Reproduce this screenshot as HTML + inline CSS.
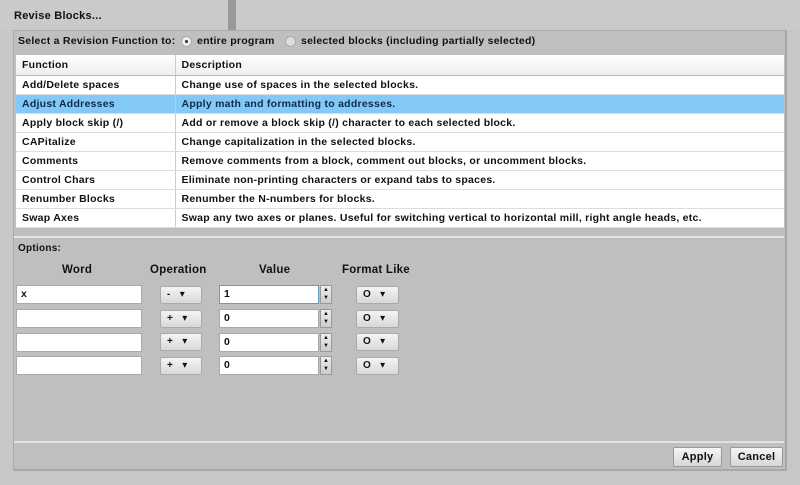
<!DOCTYPE html>
<html><head><style>
*{margin:0;padding:0;box-sizing:border-box}
body{width:800px;height:485px;background:#c6c8c8;font-family:"Liberation Sans","DejaVu Sans",sans-serif;font-size:11px;font-weight:bold;color:#111;position:relative;overflow:hidden;letter-spacing:.25px}
.a{position:absolute}
.title{left:14px;top:10px;font-size:11px}
.panel{left:13px;top:30px;width:774px;height:441px;background:#bfbfbf;border:1px solid #aaa;border-right:2px solid #a8a8a8;border-bottom:2px solid #a8a8a8}
table{position:absolute;left:16px;top:55px;width:768px;border-collapse:collapse;background:#fff}
td{height:19px;padding:0 6px;border-bottom:1px solid #ddd;white-space:nowrap;font-size:10.5px}
td:first-child{width:159px;border-right:1px solid #ccc}
tr.h td{height:20px;background:linear-gradient(#fff,#eee);border-bottom:1px solid #bbb}
tr.s td{background:#83c9f8;color:#0f2a4a}
.in{background:#fff;border:1px solid #aaa;height:19px;padding-left:4px;line-height:17px;font-size:10.5px}
.dd{background:linear-gradient(#f4f4f4,#d8d8d8);border:1px solid #aaa;border-radius:2px;height:18px;line-height:16px;font-size:10px}
.btn{background:linear-gradient(#f6f6f6,#d6d6d6);border:1px solid #999;border-radius:2px;height:20px;line-height:18px;text-align:center;font-size:11px}
.sp{width:12px;height:19px;background:linear-gradient(#eee,#ccc);border:1px solid #999;font-size:6px;line-height:8px;text-align:center;letter-spacing:0}
</style></head><body>
<div class="a" style="left:0;top:0;width:800px;height:30px;background:#c9cbcb"></div>
<div class="a" style="left:228px;top:0;width:8px;height:30px;background:#9a9a9a"></div>
<div class="a title">Revise Blocks...</div>
<div class="a panel"></div>
<div class="a" style="left:18px;top:35px;font-size:10.5px">Select a Revision Function to:</div>
<div class="a" style="left:181px;top:36px;width:11px;height:11px;border-radius:50%;background:#eee;border:1px solid #aaa"><div style="width:3px;height:3px;background:#333;border-radius:50%;margin:3px"></div></div>
<div class="a" style="left:197px;top:35px;font-size:10.5px">entire program</div>
<div class="a" style="left:285px;top:36px;width:11px;height:11px;border-radius:50%;background:#ddd;border:1px solid #aaa"></div>
<div class="a" style="left:301px;top:35px;font-size:10.5px">selected blocks (including partially selected)</div>
<table>
<tr class="h"><td>Function</td><td>Description</td></tr>
<tr><td>Add/Delete spaces</td><td>Change use of spaces in the selected blocks.</td></tr>
<tr class="s"><td>Adjust Addresses</td><td>Apply math and formatting to addresses.</td></tr>
<tr><td>Apply block skip (/)</td><td>Add or remove a block skip (/) character to each selected block.</td></tr>
<tr><td>CAPitalize</td><td>Change capitalization in the selected blocks.</td></tr>
<tr><td>Comments</td><td>Remove comments from a block, comment out blocks, or uncomment blocks.</td></tr>
<tr><td>Control Chars</td><td>Eliminate non-printing characters or expand tabs to spaces.</td></tr>
<tr><td>Renumber Blocks</td><td>Renumber the N-numbers for blocks.</td></tr>
<tr><td>Swap Axes</td><td>Swap any two axes or planes. Useful for switching vertical to horizontal mill, right angle heads, etc.</td></tr>
</table>
<div class="a" style="left:14px;top:236px;width:770px;height:2px;background:#e6e6e6"></div>
<div class="a" style="left:18px;top:243px;font-size:10px">Options:</div>
<div class="a" style="left:62px;top:264px;font-size:11.5px">Word</div>
<div class="a" style="left:150px;top:264px;font-size:11.5px">Operation</div>
<div class="a" style="left:259px;top:264px;font-size:11.5px">Value</div>
<div class="a" style="left:342px;top:264px;font-size:11.5px">Format Like</div>

<div class="a in" style="left:16px;top:285px;width:126px">x</div>
<div class="a in" style="left:16px;top:309px;width:126px"></div>
<div class="a in" style="left:16px;top:333px;width:126px"></div>
<div class="a in" style="left:16px;top:356px;width:126px"></div>

<div class="a dd" style="left:160px;top:286px;width:42px">&nbsp;&nbsp;-&nbsp;&nbsp;&nbsp;▾</div>
<div class="a dd" style="left:160px;top:310px;width:42px">&nbsp;&nbsp;+&nbsp;&nbsp;&nbsp;▾</div>
<div class="a dd" style="left:160px;top:333px;width:42px">&nbsp;&nbsp;+&nbsp;&nbsp;&nbsp;▾</div>
<div class="a dd" style="left:160px;top:357px;width:42px">&nbsp;&nbsp;+&nbsp;&nbsp;&nbsp;▾</div>

<div class="a in" style="left:219px;top:285px;width:100px;border-color:#6a9bc0">1</div>
<div class="a in" style="left:219px;top:309px;width:100px">0</div>
<div class="a in" style="left:219px;top:333px;width:100px">0</div>
<div class="a in" style="left:219px;top:356px;width:100px">0</div>
<div class="a sp" style="left:320px;top:285px">▲<br>▼</div>
<div class="a sp" style="left:320px;top:309px">▲<br>▼</div>
<div class="a sp" style="left:320px;top:333px">▲<br>▼</div>
<div class="a sp" style="left:320px;top:356px">▲<br>▼</div>

<div class="a dd" style="left:356px;top:286px;width:43px">&nbsp;&nbsp;O&nbsp;&nbsp;&nbsp;▾</div>
<div class="a dd" style="left:356px;top:310px;width:43px">&nbsp;&nbsp;O&nbsp;&nbsp;&nbsp;▾</div>
<div class="a dd" style="left:356px;top:333px;width:43px">&nbsp;&nbsp;O&nbsp;&nbsp;&nbsp;▾</div>
<div class="a dd" style="left:356px;top:357px;width:43px">&nbsp;&nbsp;O&nbsp;&nbsp;&nbsp;▾</div>

<div class="a" style="left:14px;top:441px;width:770px;height:2px;background:#e2e2e2"></div>
<div class="a btn" style="left:673px;top:447px;width:49px">Apply</div>
<div class="a btn" style="left:730px;top:447px;width:53px">Cancel</div>
</body></html>
